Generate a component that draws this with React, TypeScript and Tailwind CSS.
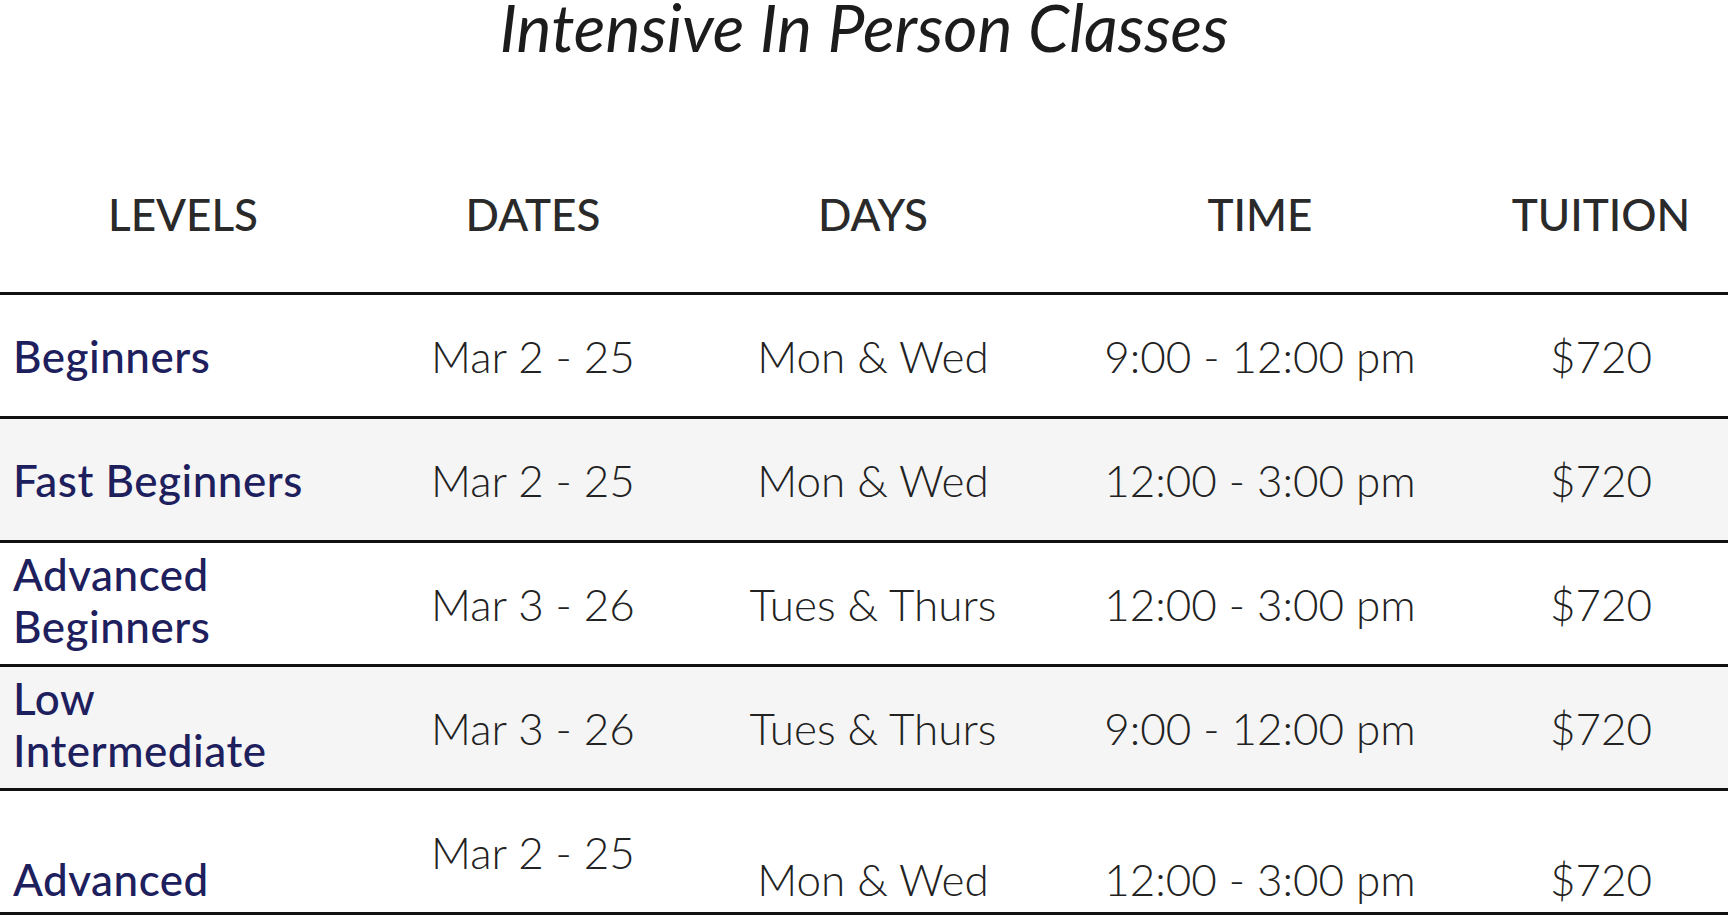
const rows = [
  { level: ['Beginners'], dates: 'Mar 2 - 25', days: 'Mon & Wed', time: '9:00 - 12:00 pm', tuition: '$720', shaded: false, low: false },
  { level: ['Fast Beginners'], dates: 'Mar 2 - 25', days: 'Mon & Wed', time: '12:00 - 3:00 pm', tuition: '$720', shaded: true, low: false },
  { level: ['Advanced', 'Beginners'], dates: 'Mar 3 - 26', days: 'Tues & Thurs', time: '12:00 - 3:00 pm', tuition: '$720', shaded: false, low: false },
  { level: ['Low', 'Intermediate'], dates: 'Mar 3 - 26', days: 'Tues & Thurs', time: '9:00 - 12:00 pm', tuition: '$720', shaded: true, low: false },
  { level: ['Advanced'], dates: 'Mar 2 - 25', days: 'Mon & Wed', time: '12:00 - 3:00 pm', tuition: '$720', shaded: false, low: true },
];

const grid = 'grid grid-cols-[366px_334px_346px_428px_254px]';

export default function App() {
  return (
    <div className="min-h-screen w-[1728px] bg-white text-[#222222] font-['Lato','Liberation_Sans',sans-serif] overflow-hidden">
      <h1 className="text-center text-[66px] leading-[54px] italic font-normal text-[#1c1c1c]">
        Intensive In Person Classes
      </h1>

      <div className={`${grid} pt-[138px] pb-[56px] border-b-[3px] border-[#111111] text-[44px] leading-[44px] font-medium text-[#2a2a2a]`}>
        <div className="text-center">LEVELS</div>
        <div className="text-center">DATES</div>
        <div className="text-center">DAYS</div>
        <div className="text-center">TIME</div>
        <div className="text-center">TUITION</div>
      </div>

      {rows.map((row, i) => (
        <div
          key={i}
          className={`${grid} h-[124px] border-b-[3px] border-[#111111] text-[44px] leading-[44px] ${
            row.shaded ? 'bg-[#f5f5f5]' : 'bg-white'
          }`}
        >
          <div
            className={`flex flex-col justify-center pl-[13px] text-[#1e205e] font-medium tracking-[0.5px] leading-[52px] ${
              row.low ? 'pt-[54px]' : row.level.length > 1 ? 'pb-[7px]' : ''
            }`}
          >
            {row.level.map((l) => (
              <span key={l}>{l}</span>
            ))}
          </div>
          <div className="flex items-center justify-center font-light">{row.dates}</div>
          <div className={`flex items-center justify-center font-light ${row.low ? 'pt-[54px]' : ''}`}>{row.days}</div>
          <div className={`flex items-center justify-center font-light ${row.low ? 'pt-[54px]' : ''}`}>{row.time}</div>
          <div className={`flex items-center justify-center font-light ${row.low ? 'pt-[54px]' : ''}`}>{row.tuition}</div>
        </div>
      ))}
    </div>
  );
}
